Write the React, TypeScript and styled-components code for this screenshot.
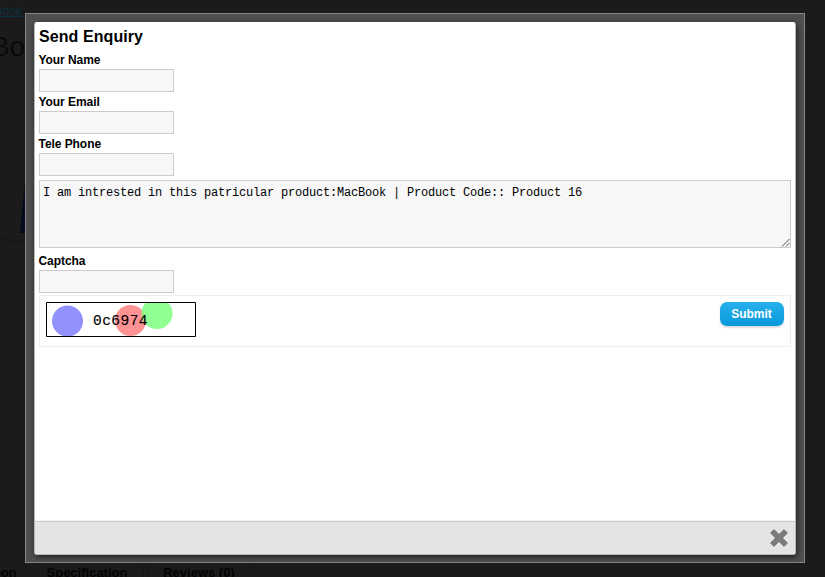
import React from "react";
import styled, { createGlobalStyle } from "styled-components";

const GlobalStyle = createGlobalStyle`
  * { box-sizing: border-box; }
  body { margin: 0; background: #1b1b1b; overflow: hidden; font-family: "Liberation Sans", Arial, sans-serif; }
`;

const Page = styled.div`
  height: 577px;
  overflow: hidden;
  background: #1b1b1b;
  display: flex;
  flex-direction: column;
  justify-content: space-between;
`;

const PageTop = styled.header`
  height: 86px;
  width: 260px;
  border-bottom: 1px solid #181818;
`;

const Crumb = styled.a`
  display: block;
  width: 22px;
  height: 16px;
  margin-top: 4px;
  direction: rtl;
  font-size: 12px;
  line-height: 14px;
  white-space: nowrap;
  overflow: hidden;
  color: #0b3144;
  text-decoration: underline;
`;

const PageTitle = styled.h1`
  width: 80px;
  margin: 10px 0 0 -62px;
  font-size: 28px;
  line-height: 34px;
  font-weight: 400;
  white-space: nowrap;
  color: #090909;
`;

const Product = styled.svg`
  display: block;
  width: 26px;
  height: 190px;
  margin-bottom: 190px;
`;

const TabBar = styled.nav`
  display: flex;
  flex: none;
  height: 21px;
  margin-left: -65px;
`;

const Tab = styled.div<{ $width: number }>`
  width: ${(p) => p.$width}px;
  margin-right: 3px;
  padding-top: 8px;
  border: 1px solid #171717;
  border-bottom: 0;
  text-align: center;
  font-size: 13px;
  line-height: 15px;
  font-weight: 700;
  white-space: nowrap;
  color: #030303;
`;

const Frame = styled.div`
  position: fixed;
  left: 25px;
  top: 13px;
  width: 780px;
  height: 550px;
  padding: 8px;
  border: 1px solid #858585;
  background: #505050;
`;

const Dialog = styled.section`
  display: flex;
  flex-direction: column;
  width: 762px;
  height: 533px;
  border: 1px solid #b8b8b8;
  border-top-color: #fff;
  border-radius: 3px;
  background: #fff;
  box-shadow: 1px 2px 6px rgba(0, 0, 0, 0.65);
  overflow: hidden;
`;

const Form = styled.form`
  display: flex;
  flex: 1;
  flex-direction: column;
  align-items: flex-start;
  padding: 4px 4px 0;
`;

const Heading = styled.h2`
  margin: 0;
  height: 25px;
  font-size: 16px;
  line-height: 20px;
  font-weight: 700;
  letter-spacing: 0.08px;
  color: #000;
`;

const Label = styled.label`
  height: 17px;
  margin-left: -0.5px;
  font-size: 12px;
  line-height: 17px;
  font-weight: 700;
  letter-spacing: -0.06px;
  color: #000;
`;

const Input = styled.input`
  width: 135px;
  height: 23px;
  margin: 0 0 2px;
  padding: 3px;
  border: 1px solid #ccc;
  border-radius: 0;
  background: #f7f7f7;
`;

const MessageWrap = styled.div`
  position: relative;
  width: 752px;
  height: 68px;
  margin: 2px 0 5px;
`;

const Message = styled.textarea`
  display: block;
  width: 100%;
  height: 100%;
  margin: 0;
  padding: 5px 3px 4px;
  border: 1px solid #ccc;
  background: #f7f7f7;
  color: #000;
  resize: none;
  outline: none;
  font: 12px/14px "Liberation Mono", "Courier New", monospace;
  letter-spacing: -0.2px;
`;

const Grip = styled.svg`
  position: absolute;
  right: 1px;
  bottom: 1px;
  width: 9px;
  height: 9px;
`;

const Actions = styled.div`
  display: flex;
  justify-content: space-between;
  align-items: flex-start;
  width: 752px;
  height: 52px;
  padding: 6px;
  border: 1px solid #eee;
`;

const Captcha = styled.svg`
  width: 150px;
  height: 35px;
  display: block;
  text {
    font: 14.5px "Liberation Mono", monospace;
    stroke: #000;
    stroke-width: 0.15px;
  }
`;

const Submit = styled.button`
  width: 64px;
  height: 24px;
  padding: 0 1px 0 0;
  border: 0;
  border-radius: 7px;
  background: linear-gradient(#28b0ec, #0698da);
  box-shadow: 0 2px 2px #ddd;
  color: #fff;
  font: 700 12px/24px "Liberation Sans", Arial, sans-serif;
`;

const Footer = styled.footer`
  display: flex;
  flex: none;
  justify-content: flex-end;
  align-items: center;
  height: 33px;
  padding-right: 5px;
  border-top: 1px solid #ccc;
  background: #e4e4e4;
  box-shadow: 0 -1px 0 #f2f2f2;
`;

const Close = styled.button`
  display: flex;
  margin-top: -1px;
  padding: 0;
  border: 0;
  background: none;
`;

const fields = ["Your Name", "Your Email", "Tele Phone"];

export default function App() {
  return (
    <>
      <GlobalStyle />
      <Page>
        <PageTop>
          <Crumb>MacBook</Crumb>
          <PageTitle>MacBook</PageTitle>
        </PageTop>
        <Product viewBox="0 0 26 190">
          <path d="M26 40 L20 102 H26Z" fill="#020b1b" />
          <path d="M0 108 Q12 111 26 109 M0 134 Q12 138 26 136" stroke="#171717" fill="none" />
        </Product>
        <TabBar>
          <Tab $width={92}>Description</Tab>
          <Tab $width={114}>Specification</Tab>
          <Tab $width={104}>Reviews (0)</Tab>
        </TabBar>
      </Page>
      <Frame>
        <Dialog>
          <Form onSubmit={(e) => e.preventDefault()}>
            <Heading>Send Enquiry</Heading>
            {fields.map((name) => (
              <React.Fragment key={name}>
                <Label htmlFor={name}>{name}</Label>
                <Input id={name} />
              </React.Fragment>
            ))}
            <MessageWrap>
              <Message
                spellCheck={false}
                defaultValue="I am intrested in this patricular product:MacBook | Product Code:: Product 16"
              />
              <Grip viewBox="0 0 9 9">
                <path d="M1 8.5 8.5 1M5 8.5 8.5 5" stroke="#555" fill="none" />
              </Grip>
            </MessageWrap>
            <Label htmlFor="captcha">Captcha</Label>
            <Input id="captcha" />
            <Actions>
              <Captcha viewBox="0 0 150 35">
                <rect width="150" height="35" fill="#fff" />
                <circle cx="21.5" cy="19" r="15.5" fill="#9292ff" />
                <circle cx="84.5" cy="18.5" r="15.5" fill="#ff9292" />
                <circle cx="111" cy="11.5" r="15.5" fill="#80ff80" fillOpacity="0.86" />
                <path d="M.5 .5H149.5V34.5H.5Z" fill="none" stroke="#000" />
                <text x="47" y="23" textLength="54.5">0c6974</text>
              </Captcha>
              <Submit type="submit">Submit</Submit>
            </Actions>
          </Form>
          <Footer>
            <Close aria-label="Close">
              <svg width="22" height="22" viewBox="0 0 22 22">
                <path
                  d="M4 4 18 18M18 4 4 18"
                  stroke="#f0f0f0"
                  strokeWidth="7.6"
                />
                <path
                  d="M4 4 18 18M18 4 4 18"
                  stroke="#7b7b7b"
                  strokeWidth="5.8"
                />
              </svg>
            </Close>
          </Footer>
        </Dialog>
      </Frame>
    </>
  );
}
